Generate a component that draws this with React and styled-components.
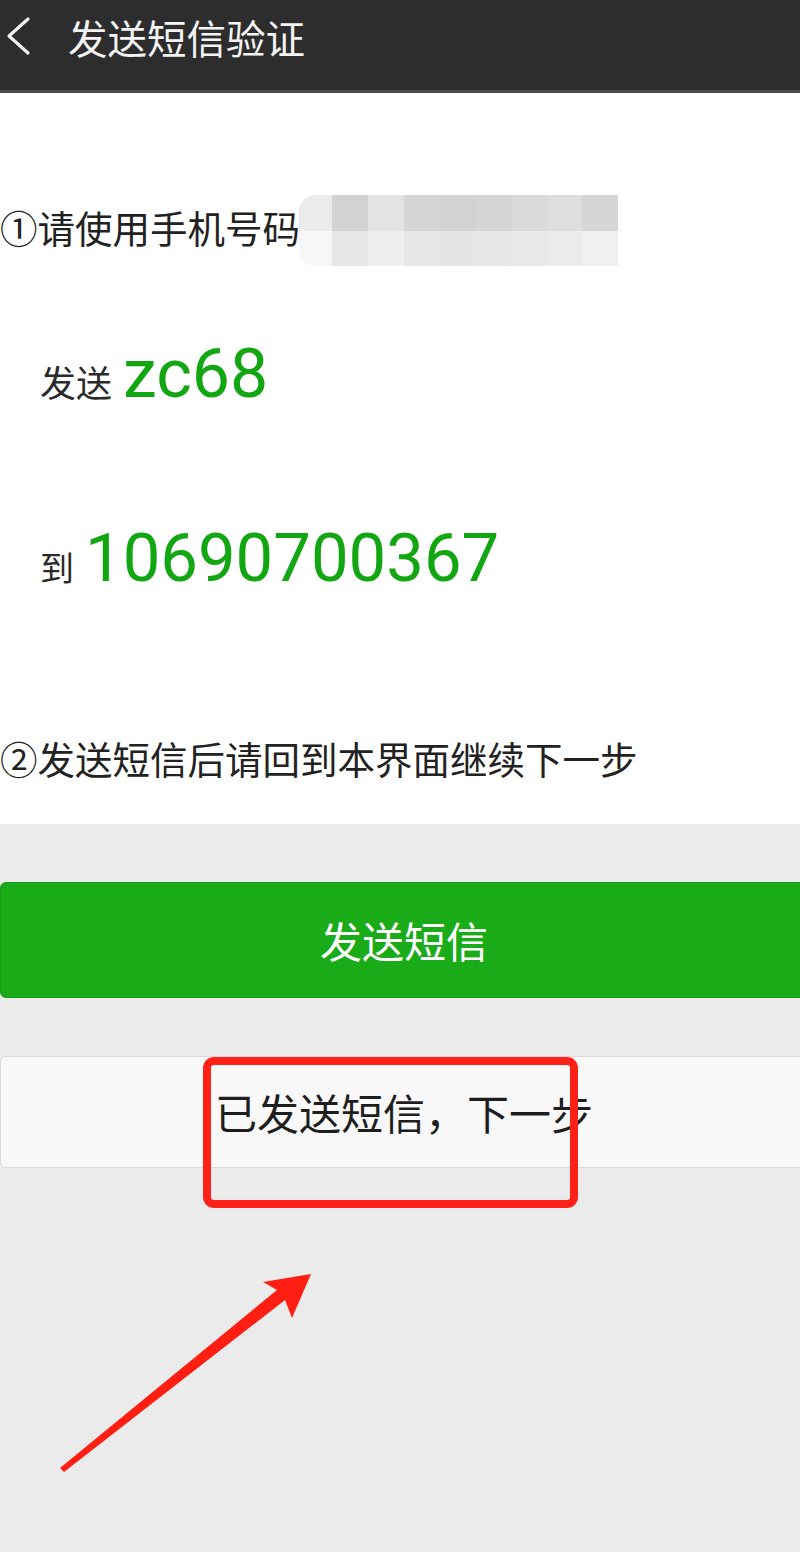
import React from "react";
import styled, { createGlobalStyle } from "styled-components";

const Global = createGlobalStyle`
  html, body { margin: 0; padding: 0; background: #ebebeb; }
  body { font-family: "Noto Sans CJK SC", "Noto Sans", sans-serif; }
  #root { width: 800px; }
`;

const Page = styled.div`
  position: relative;
  width: 800px;
  min-height: 1552px;
  display: flex;
  flex-direction: column;
  overflow: hidden;
`;

const Header = styled.header`
  height: 93px;
  box-sizing: border-box;
  padding: 0 0 16px 0;
  display: flex;
  align-items: center;
  background: #2d2d2d;
  border-bottom: 3px solid #4a4a4a;
`;

const BackButton = styled.div`
  width: 68px;
  height: 44px;
  display: flex;
  align-items: center;
  svg { display: block; }
`;

const Title = styled.h1`
  margin: 0;
  font-size: 39.5px;
  font-weight: 400;
  line-height: 1;
  color: #f4f4f4;
`;

const Main = styled.section`
  background: #ffffff;
  padding: 102px 0 31px 0;
  display: flex;
  flex-direction: column;
`;

const StepRow = styled.div`
  display: flex;
  align-items: center;
  height: 71px;
  margin-top: ${(p) => p.$top || 0}px;
`;

const StepText = styled.span`
  font-size: 37.5px;
  line-height: 1;
  color: #222;
  margin-bottom: ${(p) => p.$lift || 0}px;
  white-space: nowrap;
`;

const Mosaic = styled.div`
  display: flex;
  height: 71px;
  margin-left: -1px;
  border-radius: 16px 0 0 16px;
  overflow: hidden;
`;

const MosaicCol = styled.div`
  display: flex;
  flex-direction: column;
  width: ${(p) => p.$w}px;
`;

const MosaicCell = styled.div`
  flex: 1;
  background: ${(p) => p.$c};
`;

const CodeRow = styled.div`
  display: flex;
  align-items: baseline;
  padding-left: 40px;
  margin-top: ${(p) => p.$top}px;
`;

const CodeLabel = styled.span`
  font-size: ${(p) => p.$size}px;
  line-height: 1;
  color: #2a2a2a;
`;

const CodeValue = styled.span`
  font-family: Roboto, "Noto Sans", sans-serif;
  font-size: ${(p) => p.$size}px;
  line-height: 1;
  color: #13a613;
  margin-left: ${(p) => p.$gap}px;
`;

const Actions = styled.section`
  flex: 1;
  background: #ebebeb;
  padding-top: 58px;
  display: flex;
  flex-direction: column;
  gap: 58px;
`;

const Button = styled.div`
  box-sizing: border-box;
  width: 808px;
  height: ${(p) => (p.$primary ? 116 : 112)}px;
  border-radius: 6px;
  display: flex;
  align-items: center;
  justify-content: center;
  font-size: 42px;
  line-height: 1;
  background: ${(p) => (p.$primary ? "#1aab19" : "#f8f8f8")};
  border: 1px solid ${(p) => (p.$primary ? "#149d13" : "#dadada")};
  color: ${(p) => (p.$primary ? "#ffffff" : "#1e1e1e")};
`;

const Highlight = styled.div`
  position: absolute;
  left: 203px;
  top: 1057px;
  width: 375px;
  height: 151px;
  box-sizing: border-box;
  border: 8px solid #ff2117;
  border-radius: 11px;
  pointer-events: none;
`;

const ArrowMark = styled.svg`
  position: absolute;
  left: 0;
  top: 1250px;
  pointer-events: none;
`;

const mosaic = [
  { w: 33, top: "#ebebeb", bottom: "#f7f7f7" },
  { w: 36, top: "#d2d2d2", bottom: "#e7e7e7" },
  { w: 36, top: "#e3e3e3", bottom: "#efefef" },
  { w: 36, top: "#d5d5d5", bottom: "#e6e6e6" },
  { w: 36, top: "#d3d3d3", bottom: "#e5e5e5" },
  { w: 35, top: "#d5d5d5", bottom: "#e6e6e6" },
  { w: 36, top: "#d9d9d9", bottom: "#e9e9e9" },
  { w: 35, top: "#dedede", bottom: "#ebebeb" },
  { w: 36, top: "#d6d6d6", bottom: "#f0f0f0" },
];

export default function App() {
  return (
    <>
      <Global />
      <Page>
        <Header>
          <BackButton>
            <svg width="40" height="44" viewBox="0 0 40 44">
              <polyline
                points="28,4 9,21 28,38"
                fill="none"
                stroke="#f0f0f0"
                strokeWidth="3.2"
                strokeLinecap="round"
                strokeLinejoin="round"
              />
            </svg>
          </BackButton>
          <Title>发送短信验证</Title>
        </Header>

        <Main>
          <StepRow>
            <StepText $lift={8}>①请使用手机号码</StepText>
            <Mosaic>
              {mosaic.map((m, i) => (
                <MosaicCol key={i} $w={m.w}>
                  <MosaicCell $c={m.top} />
                  <MosaicCell $c={m.bottom} />
                </MosaicCol>
              ))}
            </Mosaic>
          </StepRow>

          <CodeRow $top={74}>
            <CodeLabel $size={36}>发送</CodeLabel>
            <CodeValue $size={68} $gap={11}>zc68</CodeValue>
          </CodeRow>

          <CodeRow $top={117}>
            <CodeLabel $size={34}>到</CodeLabel>
            <CodeValue $size={67} $gap={11}>10690700367</CodeValue>
          </CodeRow>

          <StepRow $top={130}>
            <StepText>②发送短信后请回到本界面继续下一步</StepText>
          </StepRow>
        </Main>

        <Actions>
          <Button $primary>发送短信</Button>
          <Button>已发送短信，下一步</Button>
        </Actions>

        <Highlight />
        <ArrowMark width="340" height="240" viewBox="0 0 340 240">
          <polygon
            points="60,218 277,40 263,32 311,24 292,68 285,50 64,222"
            fill="#ff1f12"
          />
        </ArrowMark>
      </Page>
    </>
  );
}
